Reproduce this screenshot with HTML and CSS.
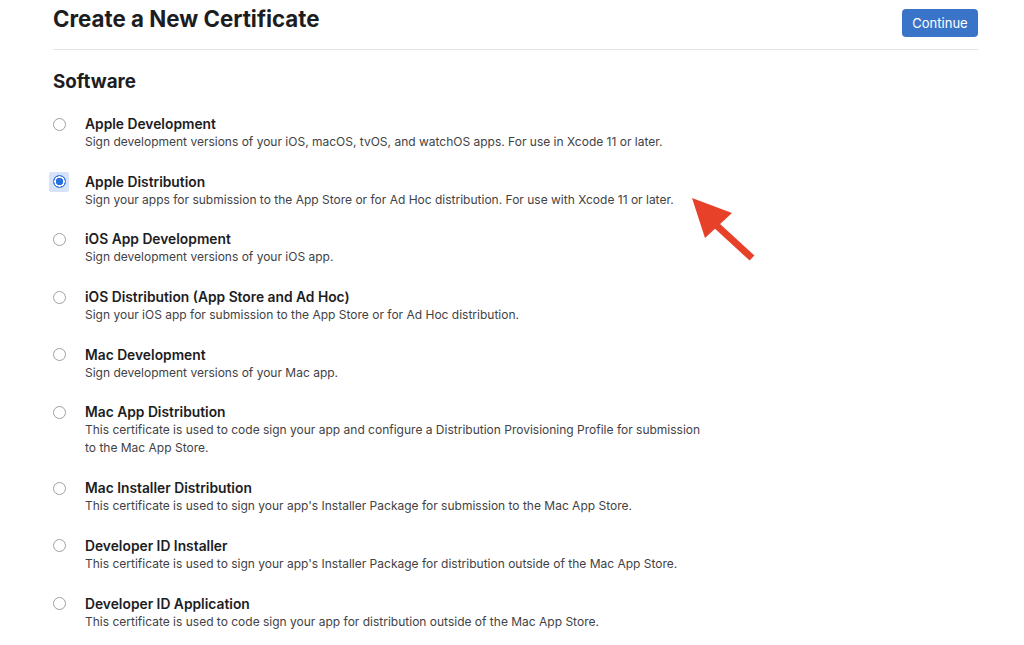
FILE: index.html
```html
<!DOCTYPE html>
<html lang="en">
<head>
    <meta charset="UTF-8">
    <meta name="viewport" content="width=device-width, initial-scale=1.0">
    <title>Create a New Certificate</title>
    <link rel="stylesheet" href="styles.css">
</head>
<body>
    <div class="page">
        <div class="header">
            <h1>Create a New Certificate</h1>
            <button class="btn-primary">Continue</button>
        </div>

        <h2>Software</h2>

        <div class="options">
            <label class="option">
                <span class="radio-wrap"><input type="radio" name="cert"></span>
                <span class="option-text">
                    <span class="option-title">Apple Development</span>
                    <span class="option-desc">Sign development versions of your iOS, macOS, tvOS, and watchOS apps. For use in Xcode 11 or later.</span>
                </span>
            </label>
            <label class="option">
                <span class="radio-wrap focused"><input type="radio" name="cert" checked></span>
                <span class="option-text">
                    <span class="option-title">Apple Distribution</span>
                    <span class="option-desc">Sign your apps for submission to the App Store or for Ad Hoc distribution. For use with Xcode 11 or later.</span>
                </span>
            </label>
            <label class="option">
                <span class="radio-wrap"><input type="radio" name="cert"></span>
                <span class="option-text">
                    <span class="option-title">iOS App Development</span>
                    <span class="option-desc">Sign development versions of your iOS app.</span>
                </span>
            </label>
            <label class="option">
                <span class="radio-wrap"><input type="radio" name="cert"></span>
                <span class="option-text">
                    <span class="option-title">iOS Distribution (App Store and Ad Hoc)</span>
                    <span class="option-desc">Sign your iOS app for submission to the App Store or for Ad Hoc distribution.</span>
                </span>
            </label>
            <label class="option">
                <span class="radio-wrap"><input type="radio" name="cert"></span>
                <span class="option-text">
                    <span class="option-title">Mac Development</span>
                    <span class="option-desc">Sign development versions of your Mac app.</span>
                </span>
            </label>
            <label class="option">
                <span class="radio-wrap"><input type="radio" name="cert"></span>
                <span class="option-text">
                    <span class="option-title">Mac App Distribution</span>
                    <span class="option-desc">This certificate is used to code sign your app and configure a Distribution Provisioning Profile for submission to the Mac App Store.</span>
                </span>
            </label>
            <label class="option">
                <span class="radio-wrap"><input type="radio" name="cert"></span>
                <span class="option-text">
                    <span class="option-title">Mac Installer Distribution</span>
                    <span class="option-desc">This certificate is used to sign your app's Installer Package for submission to the Mac App Store.</span>
                </span>
            </label>
            <label class="option">
                <span class="radio-wrap"><input type="radio" name="cert"></span>
                <span class="option-text">
                    <span class="option-title">Developer ID Installer</span>
                    <span class="option-desc">This certificate is used to sign your app's Installer Package for distribution outside of the Mac App Store.</span>
                </span>
            </label>
            <label class="option">
                <span class="radio-wrap"><input type="radio" name="cert"></span>
                <span class="option-text">
                    <span class="option-title">Developer ID Application</span>
                    <span class="option-desc">This certificate is used to code sign your app for distribution outside of the Mac App Store.</span>
                </span>
            </label>
        </div>

        <!-- annotation arrow pointing at the selected option -->
        <svg class="arrow" width="80" height="80" viewBox="0 0 80 80">
            <polygon points="7,6 47,21 20,46" fill="#e8412a"/>
            <line x1="30" y1="32" x2="67" y2="66" stroke="#e8412a" stroke-width="7"/>
        </svg>
    </div>
</body>
</html>
```

FILE: styles.css
```css
body {
    margin: 0;
    font-family: Inter, "Noto Sans", sans-serif;
    color: #1d1d1f;
    background-color: #fff;
    overflow: hidden;
}

.page {
    position: relative;
    padding: 0 46px 0 53px;
}

.header {
    display: flex;
    justify-content: space-between;
    align-items: flex-start;
    height: 49px;
    border-bottom: 1px solid #e3e3e3;
}

h1 {
    margin: 0;
    font-size: 22.3px;
    line-height: 38px;
    font-weight: 700;
    letter-spacing: 0;
}

.btn-primary {
    margin-top: 9px;
    width: 76px;
    height: 28px;
    background-color: #3a74c8;
    color: #fff;
    border: none;
    border-radius: 4px;
    font-family: inherit;
    font-size: 13px;
    cursor: pointer;
}

h2 {
    margin: 20px 0 21px 0;
    font-size: 18.8px;
    line-height: 24px;
    font-weight: 700;
}

.options {
    display: flex;
    flex-direction: column;
    gap: 21.7px;
}

.option {
    display: grid;
    grid-template-columns: 32px 1fr;
    cursor: pointer;
}

.radio-wrap {
    display: flex;
    align-items: center;
    justify-content: flex-start;
    height: 18px;
    position: relative;
}

.radio-wrap input {
    appearance: none;
    -webkit-appearance: none;
    margin: 0;
    width: 13px;
    height: 13px;
    border: 1px solid #a0a0a0;
    border-radius: 50%;
    background-color: #fff;
}

.radio-wrap input:checked {
    border: 1px solid #2a6fe0;
    background: radial-gradient(circle, #2a6fe0 0 3.5px, #fff 4px 5px, #2a6fe0 5.5px);
}

.radio-wrap.focused::before {
    content: "";
    position: absolute;
    left: -4px;
    top: -1px;
    width: 20px;
    height: 20px;
    background-color: #d6e3fa;
    border-radius: 2px;
}

.radio-wrap.focused input {
    position: relative;
}

.option-text {
    display: flex;
    flex-direction: column;
    max-width: 622px;
}

.option-title {
    font-size: 13.8px;
    line-height: 18px;
    font-weight: 600;
}

.option-desc {
    font-size: 12px;
    line-height: 18px;
    color: #424245;
}

.arrow {
    position: absolute;
    left: 685px;
    top: 192px;
}
```
